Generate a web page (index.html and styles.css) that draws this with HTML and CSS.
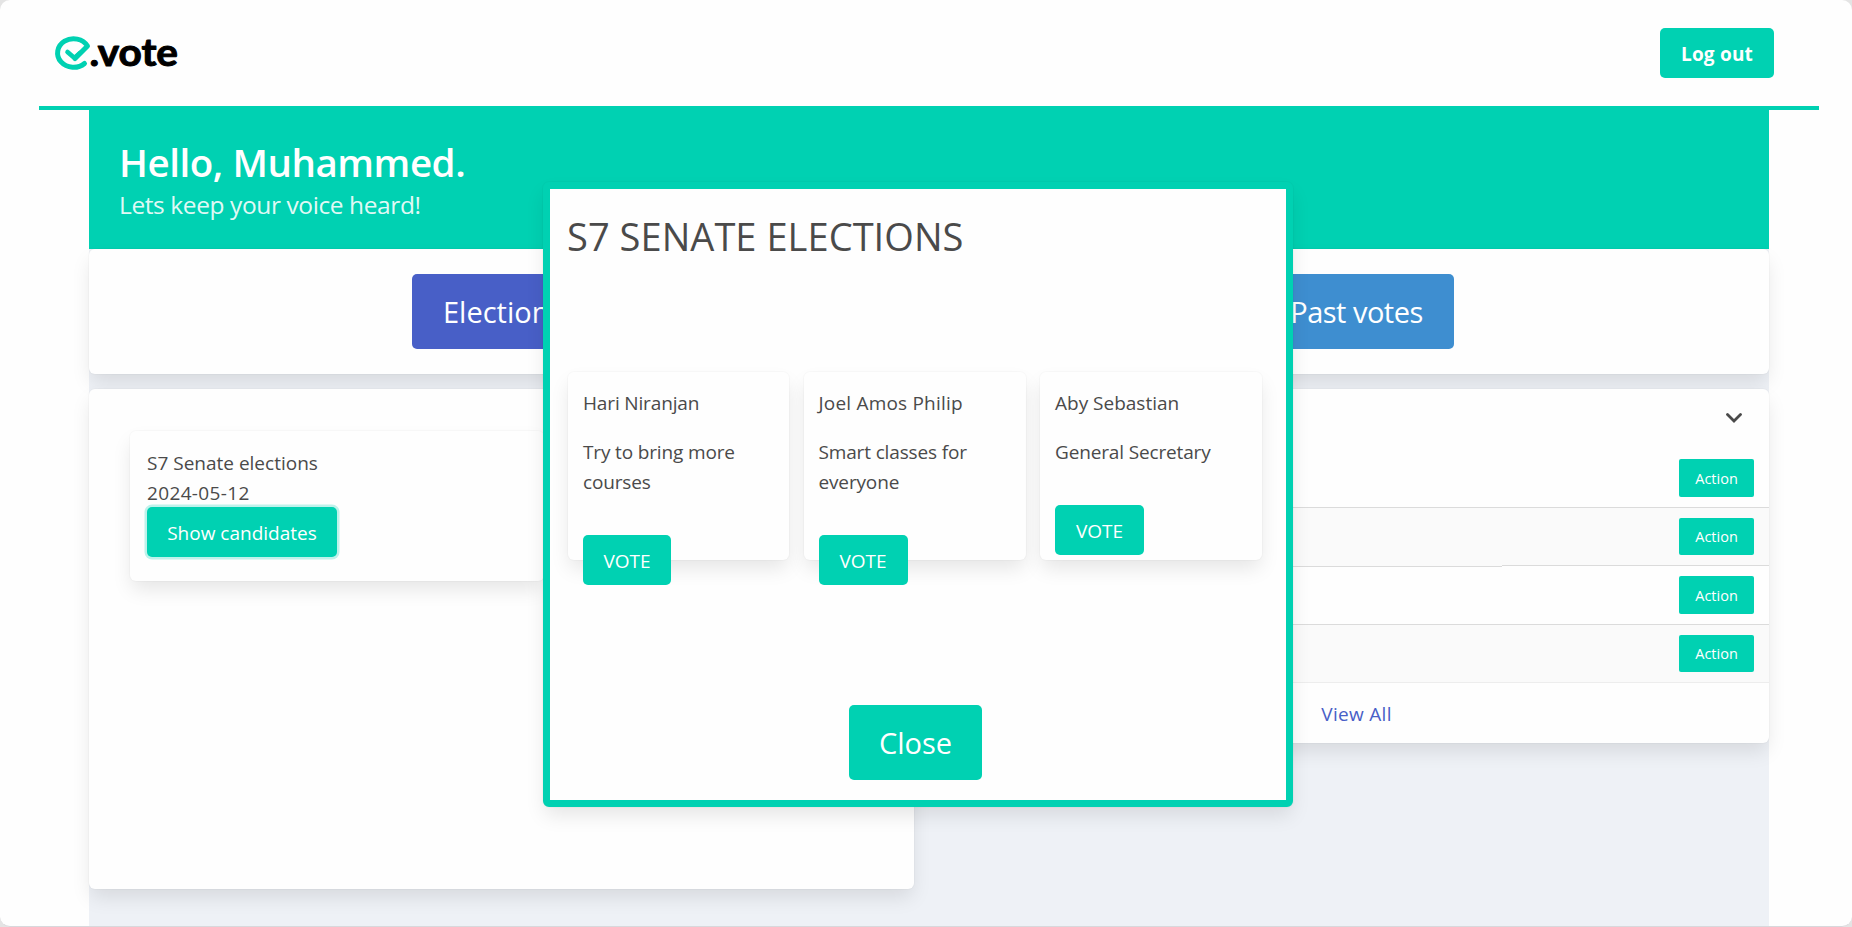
FILE: index.html
```html
<!DOCTYPE html>
<html lang="en">
<head>
<meta charset="utf-8">
<title>e.vote</title>
<link rel="stylesheet" href="styles.css">
</head>
<body>
<div class="page">
  <header class="navbar">
    <svg class="logo" width="134" height="60" viewBox="50 23 134 60">
      <path d="M75 58.500 L87.500 46 A16 14.300 0 1 0 84.500 63.500" fill="none" stroke="#00d1b2" stroke-width="5" stroke-linecap="round" stroke-linejoin="round"/>
      <path d="M67.500 52 L74.500 58 L80 53" fill="none" stroke="#00d1b2" stroke-width="4.600" stroke-linecap="round" stroke-linejoin="round"/>
      <text class="logo-text" x="89.500" y="65.600" textLength="88.500" lengthAdjust="spacingAndGlyphs">.vote</text>
    </svg>
    <button class="button logout">Log out</button>
  </header>
  <main class="content">
    <section class="hero">
      <h1 class="hero-title">Hello, Muhammed.</h1>
      <p class="hero-subtitle">Lets keep your voice heard!</p>
    </section>
    <section class="box tabs">
      <div class="tab"><button class="button large link">Elections</button></div>
      <div class="tab"><button class="button large info">Past votes</button></div>
    </section>
    <div class="columns">
      <section class="box elections">
        <article class="box election">
          <p>S7 Senate elections</p>
          <p class="date">2024-05-12</p>
          <button class="button focused">Show candidates</button>
        </article>
      </section>
      <section class="card">
        <header class="card-header">
          <svg width="16" height="10" viewBox="0 0 16 10"><path d="M1.500 1.500 L8 8 L14.500 1.500" fill="none" stroke="#4a4a4a" stroke-width="2.800" stroke-linecap="round"/></svg>
        </header>
        <div class="row"><span class="cell"></span><span class="cell end"><button class="button small">Action</button></span></div>
        <div class="row alt"><span class="cell low"></span><span class="cell end"><button class="button small">Action</button></span></div>
        <div class="row"><span class="cell"></span><span class="cell end"><button class="button small">Action</button></span></div>
        <div class="row alt last"><span class="cell"></span><span class="cell end"><button class="button small">Action</button></span></div>
        <footer class="card-footer"><a class="view-all">View All</a></footer>
      </section>
    </div>
  </main>
  <div class="modal">
    <h2 class="modal-title">S7 SENATE ELECTIONS</h2>
    <div class="candidates">
      <article class="box candidate"><p class="joined">Hari Niranjan</p><p class="motto">Try to bring more courses</p><button class="button vote first">VOTE</button></article>
      <article class="box candidate"><p class="name-wide">Joel Amos Philip</p><p class="motto">Smart classes for everyone</p><button class="button vote">VOTE</button></article>
      <article class="box candidate"><p>Aby Sebastian</p><p class="motto">General Secretary</p><button class="button vote">VOTE</button></article>
    </div>
    <button class="button large close">Close</button>
  </div>
</div>
</body>
</html>
```

FILE: styles.css
```css
* { box-sizing: border-box; margin: 0; padding: 0; }
html { background: #e4e4e4; }
body { height: 927px; overflow: hidden; font-family: "Open Sans", "Noto Sans", sans-serif; font-size: 19px; line-height: 30px; color: #4a4a4a; }
.page { position: relative; height: 927px; overflow: hidden; background: #fefefe; border-radius: 10px; border-bottom: 1px solid #d8d8dc; display: flex; flex-direction: column; }
.navbar { margin: 0 33px 0 39px; height: 110px; flex: none; border-bottom: 4px solid #00d1b2; padding: 0 45px 0 11px; display: flex; align-items: center; justify-content: space-between; }
.logo { overflow: visible; }
.logo-text { font-family: Lato, sans-serif; font-size: 38px; font-weight: 700; fill: #000; stroke: #000; stroke-width: 1; stroke-linejoin: round; }
.content { margin: 0 83px 0 89px; flex: 1; background: #eef1f6; }
.hero { height: 139px; background: #00d1b2; padding: 27px 30px; }
.hero-title { font-size: 38.500px; font-weight: 600; line-height: 50px; letter-spacing: -.45px; color: #fff; white-space: nowrap; }
.hero-subtitle { font-size: 24.500px; line-height: 36px; letter-spacing: -.4px; color: rgba(255,255,255,.9); white-space: nowrap; }
.box, .card { background: #fefefe; border-radius: 6px; box-shadow: 0 10px 20px -2px rgba(10,10,10,.1), 0 0 0 1px rgba(10,10,10,.02); }
.button { display: inline-flex; align-items: center; justify-content: center; height: 50px; border: 0; border-radius: 5px; padding-top: 1px; background: #00d1b2; color: #fff; font: inherit; white-space: nowrap; }
.logout { width: 114px; font-weight: 700; letter-spacing: .2px; padding-top: 2px; }
.large { height: 75px; font-size: 29px; padding-top: 0; }
.link { width: 188px; background: #485fc7; justify-content: flex-start; padding-left: 31px; }
.info { width: 195px; background: #3e8ed0; letter-spacing: -.5px; }
.tabs { height: 125px; display: grid; grid-template-columns: 847px 1fr; align-items: center; }
.tab { display: flex; padding-left: 323px; }
.columns { display: flex; align-items: flex-start; gap: 15px; padding-top: 15px; }
.elections { flex: none; width: 825px; height: 500px; padding: 42px 41px; }
.election { width: 414px; height: 150px; padding: 17px; white-space: nowrap; }
.date { height: 29px; letter-spacing: .35px; }
.focused { width: 190px; box-shadow: 0 0 0 2.500px rgba(0,209,178,.25); }
.card { flex: 1; min-width: 0; height: 354px; }
.card-header { height: 60px; display: flex; justify-content: flex-end; align-items: center; padding: 0 27px 2px 0; }
.row { display: flex; height: 59px; }
.row.alt { height: 58px; background: #fafafa; }
.cell { flex: 0 0 573px; border-bottom: 1px solid #dbdbdb; }
.cell.low { height: 59px; background: #fafafa; position: relative; }
.cell.end { flex: 1; display: flex; justify-content: flex-end; align-items: center; padding-right: 15px; }
.row.last .cell { border-color: #ededed; }
.small { width: 75px; height: 38px; font-size: 14.500px; border-radius: 2px; }
.row.alt .small { height: 37px; }
.card-footer { height: 60px; display: flex; justify-content: center; align-items: center; padding: 2px 0 0 15px; }
.view-all { color: #485fc7; letter-spacing: .3px; }
.modal { position: absolute; left: 543px; top: 182px; width: 750px; height: 625px; border: 7px solid #00d1b2; border-radius: 6px; background: #fefefe; box-shadow: 0 10px 20px -2px rgba(10,10,10,.1), 0 0 0 1px rgba(10,10,10,.02); padding: 17px 18px; display: flex; flex-direction: column; }
.modal-title { height: 60px; margin-left: -1px; font-size: 38px; font-weight: 400; line-height: 60px; letter-spacing: .05px; white-space: nowrap; }
.candidates { flex: none; display: grid; grid-template-columns: 221px 222px 222px; grid-template-rows: 188px; column-gap: 14.500px; margin-top: 106px; height: 188px; }
.candidate { padding: 16px 15px; }
.joined { letter-spacing: -.15px; }
.name-wide { letter-spacing: .2px; }
.motto { margin-top: 19px; letter-spacing: -.15px; }
.vote { width: 89px; margin-top: 38px; }
.vote.first { width: 88px; }
.close { width: 133px; margin: 145px 0 0 281px; flex: none; }
```
